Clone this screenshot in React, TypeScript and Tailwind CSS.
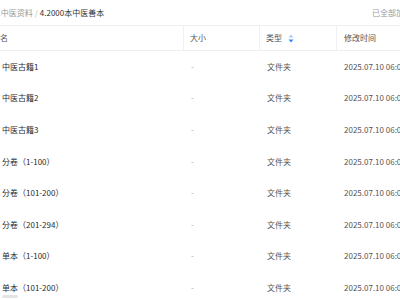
import React from 'react';

const rows = [
  '中医古籍1',
  '中医古籍2',
  '中医古籍3',
  '分卷（1-100）',
  '分卷（101-200）',
  '分卷（201-294）',
  '单本（1-100）',
  '单本（101-200）',
];

const SortIcon = () => (
  <svg width="6" height="9" viewBox="0 0 6 9" className="ml-[6px]">
    <path d="M3 0.5 L5.5 3.5 L0.5 3.5 Z" fill="#a9cdf7" />
    <path d="M3 8.5 L5.5 5.5 L0.5 5.5 Z" fill="#2d8cf0" />
  </svg>
);

const App: React.FC = () => {
  return (
    <div
      className="w-[400px] h-[300px] overflow-hidden bg-white relative text-[8px] leading-none"
      style={{ fontFamily: '"Noto Sans CJK SC", "Noto Sans", sans-serif' }}
    >
      <div className="h-[25px] flex items-center justify-between whitespace-nowrap">
        <div className="ml-[-6px] flex items-center">
          <span className="text-[#999]">2.中医资料</span>
          <span className="text-[#bbb] mx-[2px]">/</span>
          <span className="text-[#333]">4.2000本中医善本</span>
        </div>
        <div className="text-[#999] w-[28px] overflow-hidden">已全部加载</div>
      </div>

      <div className="w-[480px] ml-[-5px]">
        <div className="h-[26px] flex items-center border-y border-[#eef0f3] text-[#555]">
          <div className="w-[189px] h-full flex items-center pl-[2px] border-r border-[#eef0f3] overflow-hidden">
            <span className="ml-[-13px]">文件名</span>
          </div>
          <div className="w-[76px] h-full flex items-center pl-[6px] border-r border-[#eef0f3]">
            大小
          </div>
          <div className="w-[77px] h-full flex items-center pl-[6px] border-r border-[#eef0f3]">
            类型
            <SortIcon />
          </div>
          <div className="flex-1 h-full flex items-center pl-[7px]">修改时间</div>
        </div>

        {rows.map((name) => (
          <div key={name} className="h-[31.6px] flex items-center">
            <div className="w-[189px] pl-[7px] text-[#2b2b2b]">{name}</div>
            <div className="w-[76px] pl-[7px] text-[#aaa]">-</div>
            <div className="w-[77px] pl-[7px] text-[#555]">文件夹</div>
            <div className="flex-1 pl-[7px] text-[#555] whitespace-nowrap">2025.07.10 06:00</div>
          </div>
        ))}
      </div>

      <div className="absolute left-[2px] bottom-[2px] w-[16px] h-[3px] rounded-full bg-[#e4e4e4]" />
    </div>
  );
};

export default App;
